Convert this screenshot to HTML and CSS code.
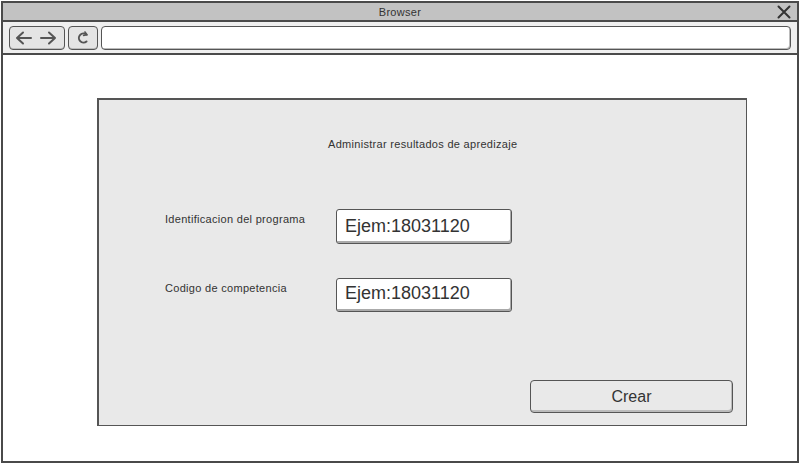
FILE: index.html
```html
<!DOCTYPE html>
<html>
<head>
<meta charset="utf-8">
<link rel="stylesheet" href="styles.css">
</head>
<body>
<div class="window">
  <div class="titlebar">
    <span class="title">Browser</span>
    <svg class="close" width="14" height="14" viewBox="0 0 14 14"><path d="M1.5 1.5 L12.5 12.5 M12.5 1.5 L1.5 12.5" stroke="#333" stroke-width="2" fill="none" stroke-linecap="round"/></svg>
  </div>
  <div class="toolbar">
    <div class="btn nav">
      <svg width="46" height="16" viewBox="0 0 46 16"><path d="M3 8 H17 M3 8 L9 2.5 M3 8 L9 13.5" stroke="#555" stroke-width="2" fill="none" stroke-linecap="round"/><path d="M27 8 H41 M41 8 L35 2.5 M41 8 L35 13.5" stroke="#555" stroke-width="2" fill="none" stroke-linecap="round"/></svg>
    </div>
    <div class="btn refresh">
      <svg width="14" height="16" viewBox="0 0 14 16"><path d="M10.5 4.5 A4.6 4.6 0 1 0 10.5 11.5" stroke="#555" stroke-width="2" fill="none" stroke-linecap="round"/><path d="M9 2 L10.8 4.8 L7.6 5.4" stroke="#555" stroke-width="1.6" fill="none" stroke-linecap="round"/></svg>
    </div>
    <div class="url"></div>
  </div>
  <div class="content">
    <div class="panel">
      <div class="heading">Administrar resultados de apredizaje</div>
      <div class="row row1">
        <div class="label">Identificacion del programa</div>
        <div class="input">Ejem:18031120</div>
      </div>
      <div class="row row2">
        <div class="label">Codigo de competencia</div>
        <div class="input">Ejem:18031120</div>
      </div>
      <div class="actions">
        <div class="button">Crear</div>
      </div>
    </div>
  </div>
</div>
</body>
</html>
```
FILE: styles.css
```css
* { box-sizing: border-box; }
html, body { margin: 0; padding: 0; background: #fff; }
body {
  width: 800px;
  height: 464px;
  font-family: "Liberation Sans", Arial, sans-serif;
  color: #333;
}
.window {
  margin: 1px;
  width: 798px;
  height: 462px;
  border: 2px solid #4a4a4a;
  display: flex;
  flex-direction: column;
}
.titlebar {
  height: 19px;
  background: #c2c2c2;
  border-bottom: 2px solid #4a4a4a;
  display: flex;
  align-items: center;
  justify-content: center;
  position: relative;
  font-size: 11px;
  color: #333;
}
.title { letter-spacing: 0.3px; }
.close {
  position: absolute;
  right: 6px;
  top: 2px;
}
.toolbar {
  height: 33px;
  background: #efefef;
  border-bottom: 2px solid #4a4a4a;
  display: flex;
  align-items: center;
  padding: 0 6px 0 6px;
  gap: 3px;
}
.btn {
  height: 24px;
  border: 1.5px solid #555;
  border-radius: 4px;
  background: #e4e4e4;
  display: flex;
  align-items: center;
  justify-content: center;
  box-shadow: inset 0 -1px 0 #bbb;
}
.nav { width: 56px; }
.refresh { width: 30px; }
.url {
  flex: 1;
  height: 24px;
  border: 1.5px solid #555;
  border-radius: 4px;
  background: #fff;
  box-shadow: inset -1px -1px 0 #bbb;
}
.content {
  flex: 1;
  padding: 43px 0 0 94px;
  background: #fff;
}
.panel {
  width: 650px;
  height: 328px;
  background: #e9e9e9;
  border: 1px solid #555;
  border-top-width: 2px;
  border-left-width: 2px;
  display: flex;
  flex-direction: column;
  padding: 0;
}
.heading {
  margin-top: 38px;
  padding-left: 229px;
  font-size: 11px;
  letter-spacing: 0.3px;
  color: #333;
}
.row {
  display: flex;
  align-items: flex-start;
  padding-left: 66px;
}
.row1 { margin-top: 59px; }
.row2 { margin-top: 34px; }
.label {
  width: 171px;
  font-size: 11px;
  letter-spacing: 0.3px;
  padding-top: 4px;
  color: #333;
}
.input {
  width: 176px;
  height: 35px;
  background: #fff;
  border: 1.5px solid #555;
  border-radius: 3px;
  box-shadow: inset -1px -2px 0 #aaa;
  font-size: 18px;
  padding: 6px 0 0 8px;
  color: #333;
}
.row2 .input { height: 34px; padding-top: 4px; }
.actions {
  margin-top: auto;
  margin-bottom: 12px;
  display: flex;
  justify-content: flex-end;
  padding-right: 13px;
}
.button {
  width: 203px;
  height: 33px;
  border: 1.5px solid #555;
  border-radius: 4px;
  background: #e9e9e9;
  box-shadow: inset -1px -2px 0 #bbb;
  display: flex;
  align-items: center;
  justify-content: center;
  font-size: 16px;
  color: #333;
}
```
